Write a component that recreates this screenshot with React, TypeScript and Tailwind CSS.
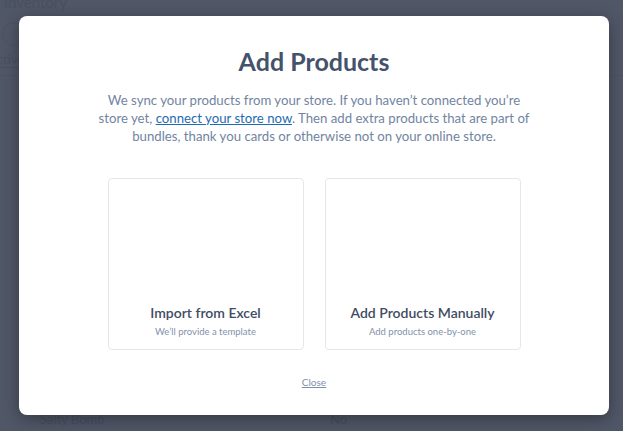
export default function App() {
  return (
    <div className="w-[628px] h-[438px] bg-white font-['Lato',sans-serif]">
      <div className="relative w-[623px] h-[431px] overflow-hidden bg-[#505767]">
        {/* faint page behind the overlay */}
        <div className="absolute left-[4px] top-[-9px] text-[15px] text-[#495061]">Inventory</div>
        <div className="absolute left-[2px] top-[22px] w-[24px] h-[24px] rounded-full border border-[#4a5162]" />
        <div className="absolute left-[-12px] top-[51px] text-[13px] leading-[16px] text-[#485060] border-b border-[#485060]">Active</div>
        <div className="absolute left-0 top-[75px] w-full h-px bg-[#4c5363]" />
        <div className="absolute left-[40px] top-[410px] text-[13px] text-[#474e5e]">Salty Bomb</div>
        <div className="absolute left-[330px] top-[410px] text-[13px] text-[#474e5e]">No</div>

        {/* modal */}
        <div className="absolute left-[19px] top-[16px] w-[590px] h-[399px] bg-white rounded-[8px] shadow-[0_4px_16px_rgba(0,0,0,0.35)] flex flex-col items-center">
          <h1 className="mt-[29px] text-[25px] leading-[32px] font-bold text-[#44526a]">Add Products</h1>
          <p className="mt-[14px] w-[440px] text-center text-[13.2px] leading-[18px] text-[#7284a1]">
            We sync your products from your store. If you haven’t connected you’re store yet,{' '}
            <a href="#" className="text-[#1f6bb0] underline">connect your store now</a>. Then add extra products that are part of bundles, thank you cards or otherwise not on your online store.
          </p>
          <div className="mt-[33px] flex gap-[21px]">
            <Card title="Import from Excel" sub="We’ll provide a template" />
            <Card title="Add Products Manually" sub="Add products one-by-one" />
          </div>
          <a href="#" className="mt-[25px] text-[10px] text-[#8090aa] underline">Close</a>
        </div>
      </div>
    </div>
  );
}

function Card({ title, sub }: { title: string; sub: string }) {
  return (
    <div className="w-[196px] h-[172px] rounded-[4px] border border-[#e4e7ec] flex flex-col items-center justify-end pb-[11px]">
      <div className="text-[14px] leading-[18px] font-semibold text-[#3f4c63]">{title}</div>
      <div className="mt-[3px] text-[9.5px] leading-[13px] text-[#8291ab]">{sub}</div>
    </div>
  );
}
